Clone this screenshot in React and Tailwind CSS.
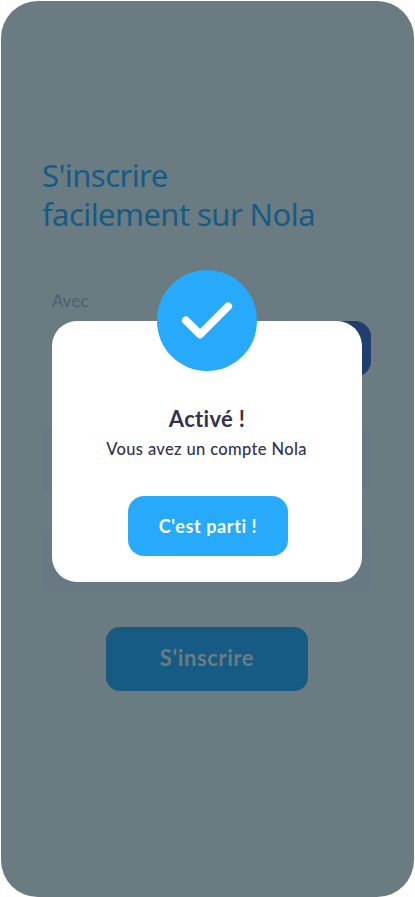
function CheckBadge() {
  return (
    <div className="relative z-10 -mb-[50px] h-[100.5px] w-[100px] rounded-full bg-[#27aafb]">
      <svg viewBox="0 0 100 100.5" fill="none" className="h-full w-full">
        <path
          d="M28.8 50.4L43 64.4L71.2 36.3"
          stroke="white"
          strokeWidth="7.8"
          strokeLinecap="round"
          strokeLinejoin="round"
        />
      </svg>
    </div>
  );
}

function SignupScreen() {
  return (
    <div className="flex h-full flex-col pl-[41.5px] pt-[155px]">
      <h1 className="whitespace-nowrap font-['Noto_Sans'] text-[31px] leading-[39px] tracking-[-0.57px] text-[#165b84]">
        S'inscrire
        <br />
        facilement sur Nola
      </h1>
      <p className="ml-2.5 mt-[57px] font-[Lato] text-[16.5px] leading-5 tracking-[0.3px] text-[#505f6b]">Avec</p>

      {/* social sign-in */}
      <div className="mt-2.5 flex h-[56px] w-[329px] justify-end">
        <div className="h-full w-[155px] rounded-2xl bg-[#203f6f]" />
      </div>

      {/* form fields */}
      <div className="mt-[50px] h-[64px] w-[329px] rounded-lg bg-[#687984]" />
      <div className="mt-[37px] h-[64px] w-[329px] rounded-lg bg-[#687984]" />

      <button
        type="button"
        className="ml-[64px] mt-[35.5px] h-[64px] w-[202px] rounded-[14px] bg-[#165b84] pb-1 font-[Lato] text-[22px] font-bold tracking-[0.6px] text-[#6b7b84]"
      >
        S'inscrire
      </button>
    </div>
  );
}

function SuccessModal() {
  return (
    <div role="dialog" className="absolute inset-0 flex flex-col items-center pr-px pt-[270px]">
      <CheckBadge />
      <div className="flex h-[261px] w-[310px] flex-col items-center rounded-[25px] bg-white pt-[83px] font-[Lato] text-[#34324f] [font-variant-ligatures:none]">
        <h2 className="text-[22px] font-bold leading-[30px] tracking-[0.3px]">Activé !</h2>
        <p className="-ml-px mt-[5px] whitespace-nowrap text-[16.5px] font-medium leading-5 tracking-[0.36px]">
          Vous avez un compte Nola
        </p>
        <button
          type="button"
          className="ml-0.5 mt-[37px] h-[60px] w-[160px] rounded-2xl bg-[#27aafb] text-lg font-bold tracking-[0.6px] text-white"
        >
          C'est parti !
        </button>
      </div>
    </div>
  );
}

export default function App() {
  return (
    <main className="h-[897px] w-[415px] bg-white">
      <div className="relative h-full pt-[0.5px] pr-px pb-[0.5px] pl-[0.5px]">
        <div className="h-full rounded-[37px] bg-[#6a7b82]">
          <SignupScreen />
        </div>
        <SuccessModal />
      </div>
    </main>
  );
}
